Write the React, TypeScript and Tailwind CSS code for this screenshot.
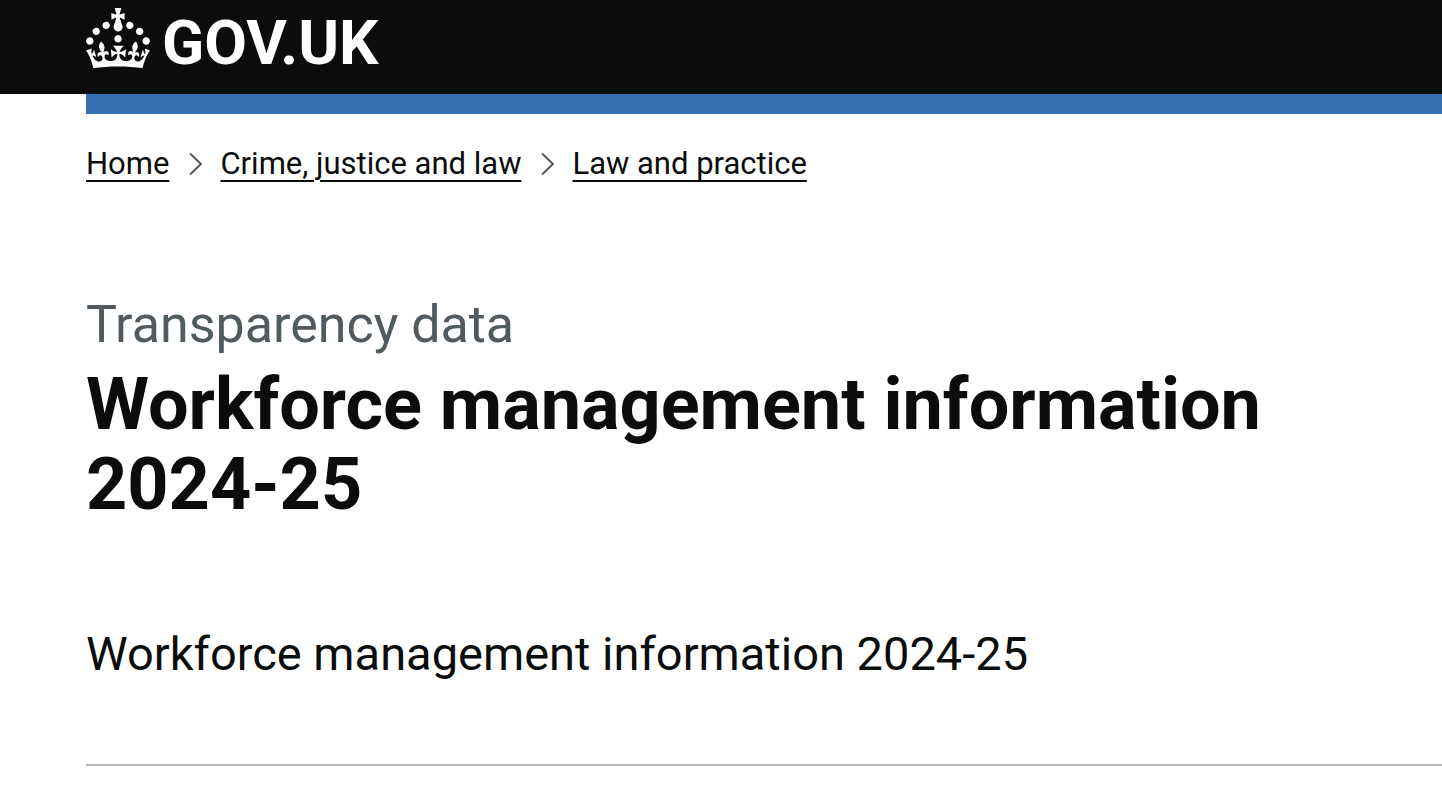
const crumbs = ["Home", "Crime, justice and law", "Law and practice"];

function Crown() {
  return (
    <svg viewBox="0 0 32 30" className="h-[60px] w-16 shrink-0 fill-white" aria-hidden="true">
      <path
        fillRule="evenodd"
        d="M22.6 10.4c-1 .4-2-.1-2.4-1-.4-.9.1-2 1-2.4.9-.4 2 .1 2.4 1s-.1 2-1 2.4m-5.9 6.7c-.9.4-2-.1-2.4-1-.4-.9.1-2 1-2.4.9-.4 2 .1 2.4 1s-.1 2-1 2.4m10.8-3.7c-1 .4-2-.1-2.4-1-.4-.9.1-2 1-2.4.9-.4 2 .1 2.4 1s0 2-1 2.4m3.3 4.8c-1 .4-2-.1-2.4-1-.4-.9.1-2 1-2.4.9-.4 2 .1 2.4 1s-.1 2-1 2.4M17 4.7l2.3 1.2V2.5l-2.3.7-.2-.2.9-3h-3.4l.9 3-.2.2c-.1.1-2.3-.7-2.3-.7v3.4L15 4.7c.1.1.1.2.2.2l-1.3 4c-.1.2-.1.4-.1.6 0 1.1.8 2 1.9 2.2h.7c1-.2 1.9-1.1 1.9-2.1 0-.2 0-.4-.1-.6l-1.3-4c-.1-.2 0-.2.1-.3m-7.6 5.7c.9.4 2-.1 2.4-1 .4-.9-.1-2-1-2.4-.9-.4-2 .1-2.4 1s0 2 1 2.4m-5 3c.9.4 2-.1 2.4-1 .4-.9-.1-2-1-2.4-.9-.4-2 .1-2.4 1s.1 2 1 2.4m-3.2 4.8c.9.4 2-.1 2.4-1 .4-.9-.1-2-1-2.4-.9-.4-2 .1-2.4 1s0 2 1 2.4m14.8 11c4.4 0 8.6.3 12.3.8 1.1-4.5 2.4-7 3.7-8.8l-2.5-.9c.2 1.3.3 1.9 0 2.7-.4-.4-.8-1.1-1.1-2.3l-1.2 4c.7-.5 1.3-.8 2-.9-1.1 2.5-2.6 3.1-3.5 3-1.1-.2-1.7-1.2-1.5-2.1.3-1.2 1.5-1.5 2.1-.1 1.1-2.3-.8-3-2-2.3 1.9-1.9 2.1-3.5.6-5.6-2.1 1.6-2.1 3.2-1.2 5.5-1.2-1.4-3.2-.6-2.5 1.6.9-1.4 2.1-.5 1.9.8-.2 1.1-1.7 2.1-3.5 1.9-2.7-.2-2.9-2.1-2.9-3.6.7-.1 1.9.5 2.9 1.9l.4-4.3c-1.1 1.1-2.1 1.4-3.2 1.4.4-1.2 2.1-3 2.1-3h-5.4s1.7 1.9 2.1 3c-1.1 0-2.1-.2-3.2-1.4l.4 4.3c1-1.4 2.2-2 2.9-1.9-.1 1.5-.2 3.4-2.9 3.6-1.9.2-3.4-.8-3.5-1.9-.2-1.3 1-2.2 1.9-.8.7-2.3-1.2-3-2.5-1.6.9-2.2.9-3.9-1.2-5.5-1.5 2-1.3 3.7.6 5.6-1.2-.7-3.1 0-2 2.3.6-1.4 1.8-1.1 2.1.1.2.9-.3 1.9-1.5 2.1-.9.2-2.4-.5-3.5-3 .6 0 1.2.3 2 .9l-1.2-4c-.3 1.1-.7 1.9-1.1 2.3-.3-.8-.2-1.4 0-2.7l-2.9.9C1.3 23 2.6 25.5 3.7 30c3.7-.5 7.9-.8 12.3-.8"
      />
    </svg>
  );
}

export default function App() {
  return (
    <div className="overflow-hidden bg-white font-['Roboto',sans-serif] text-[#0b0c0c]">
      <header className="bg-[#0b0c0c] pt-2 pb-[26px] pl-[86px]">
        <a href="#" className="flex h-[60px] w-fit items-center gap-3 text-white">
          <Crown />
          <span className="pt-2.5 text-[62px] leading-[60px] font-bold">GOV.UK</span>
        </a>
      </header>
      <div className="pl-[86px]">
        <div className="h-5 bg-[#3670b3]" />
        <nav aria-label="Breadcrumb" className="pt-[31px]">
          <ol className="flex items-center text-[31px] leading-[38px]">
            {crumbs.map((crumb, i) => (
              <li key={crumb} className="flex items-center whitespace-nowrap">
                {i > 0 && (
                  <svg viewBox="0 0 14 24" className="mr-[18px] ml-[19px] h-6 w-[14px] fill-none stroke-[#505a5f] stroke-2" aria-hidden="true">
                    <path d="M2 1.5L13 12L2 22.5" />
                  </svg>
                )}
                <a href="#" className="underline decoration-2 underline-offset-[6px]">{crumb}</a>
              </li>
            ))}
          </ol>
        </nav>
        <main className="pt-28">
          <p className="text-[52px] leading-[60px] text-[#505a5f]">Transparency data</p>
          <h1 className="max-w-[1240px] pt-2.5 text-[72px] leading-20 font-bold">Workforce management information 2024-25</h1>
          <p className="pt-[99px] text-[47px] leading-[60px]">Workforce management information 2024-25</p>
          <hr className="mt-20 border-t-2 border-[#b1b4b6]" />
        </main>
      </div>
    </div>
  );
}
